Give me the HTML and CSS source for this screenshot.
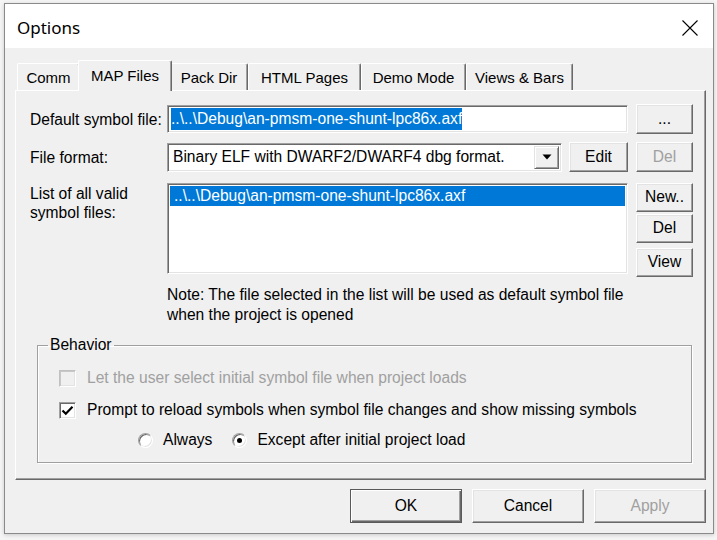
FILE: index.html
```html
<!DOCTYPE html>
<html>
<head>
<meta charset="utf-8">
<title>Options</title>
<link rel="stylesheet" href="styles.css">
</head>
<body>
<div class="window">
  <div class="titlebar">
    <span class="title">Options</span>
    <svg class="close" viewBox="0 0 16 16" width="16" height="16"><path d="M0.5 0.5 L15.5 15.5 M15.5 0.5 L0.5 15.5" stroke="#000" stroke-width="1.1" fill="none"/></svg>
  </div>
  <div class="body">
    <div class="tabs">
      <div class="tab w-comm">Comm</div>
      <div class="tab active w-map">MAP Files</div>
      <div class="tab w-pack">Pack Dir</div>
      <div class="tab w-html">HTML Pages</div>
      <div class="tab w-demo">Demo Mode</div>
      <div class="tab w-views">Views &amp; Bars</div>
    </div>
    <div class="panel">
      <div class="grid row1">
        <div class="label">Default symbol file:</div>
        <div class="sunken input"><span class="sel">..\..\Debug\an-pmsm-one-shunt-lpc86x.axf</span></div>
        <div class="btn">...</div>
      </div>
      <div class="grid row2">
        <div class="label">File format:</div>
        <div class="split">
          <div class="sunken select">
            <span class="selText">Binary ELF with DWARF2/DWARF4 dbg format.</span>
            <div class="dd"><svg width="10" height="6" viewBox="0 0 10 6"><path d="M0.5 0.5 H9.5 L5 5.5 Z" fill="#000"/></svg></div>
          </div>
          <div class="btn edit">Edit</div>
        </div>
        <div class="btn disabled">Del</div>
      </div>
      <div class="grid row3">
        <div class="label multi">List of all valid<br>symbol files:</div>
        <div class="sunken list">
          <div class="item selected">..\..\Debug\an-pmsm-one-shunt-lpc86x.axf</div>
        </div>
        <div class="btncol">
          <div class="btn">New..</div>
          <div class="btn del2">Del</div>
          <div class="btn view">View</div>
        </div>
      </div>
      <div class="note">Note: The file selected in the list will be used as default symbol file<br>when the project is opened</div>
      <fieldset class="group">
        <legend>Behavior</legend>
        <div class="crow disabled-text">
          <span class="check off"></span>
          <span>Let the user select initial symbol file when project loads</span>
        </div>
        <div class="crow">
          <span class="check on"><svg width="13" height="11" viewBox="0 0 13 11"><path d="M1.5 5.5 L4.8 8.8 L11.5 1.8" stroke="#000" stroke-width="2.2" fill="none"/></svg></span>
          <span>Prompt to reload symbols when symbol file changes and show missing symbols</span>
        </div>
        <div class="rrow">
          <span class="radio"></span><span class="rlabel">Always</span>
          <span class="radio on"><span class="dot"></span></span><span class="rlabel">Except after initial project load</span>
        </div>
      </fieldset>
    </div>
    <div class="buttons">
      <div class="btn big default">OK</div>
      <div class="btn big">Cancel</div>
      <div class="btn big disabled">Apply</div>
    </div>
  </div>
</div>
</body>
</html>
```

FILE: styles.css
```css
* { box-sizing: border-box; }
html, body { margin: 0; }
body {
  width: 717px;
  height: 540px;
  overflow: hidden;
  background: #f5f5f5;
  padding: 3px 0 0 4px;
  font-family: "Liberation Sans", Arial, sans-serif;
  font-size: 15.6px;
  color: #000;
}
.window {
  width: 710px;
  height: 531px;
  border: 1px solid #8a8a8a;
  background: #f0f0f0;
  display: flex;
  flex-direction: column;
  box-shadow: 0 1px 4px rgba(0,0,0,0.18);
}
.titlebar {
  flex: none;
  height: 44px;
  background: #fff;
  display: flex;
  align-items: center;
  justify-content: space-between;
  padding: 0 15px 0 12px;
}
.title {
  font-family: "Noto Sans", "Open Sans", sans-serif;
  font-size: 17px;
  margin-top: 2px;
}
.close { display: block; margin-top: 4px; }
.body {
  flex: 1;
  display: flex;
  flex-direction: column;
  padding: 12px 7px 10px 10px;
}
.tabs {
  flex: none;
  height: 30px;
  display: flex;
  align-items: flex-end;
  padding-left: 2px;
  position: relative;
  z-index: 1;
  font-size: 15px;
}
.tab {
  height: 27px;
  border: 1px solid;
  border-color: #fff #696969 transparent #fff;
  border-bottom: 0;
  box-shadow: inset -1px 0 #a0a0a0;
  border-radius: 2px 2px 0 0;
  background: #f0f0f0;
  display: flex;
  align-items: center;
  justify-content: center;
  padding-top: 1px;
}
.tab.active {
  height: 31px;
  margin: 0 -2px -1px -2px;
  padding-top: 0;
  padding-bottom: 2px;
  position: relative;
  z-index: 2;
}
.w-comm { width: 63px; }
.w-map { width: 94px; }
.w-pack { width: 78px; }
.w-html { width: 113px; }
.w-demo { width: 105px; }
.w-views { width: 107px; }
.panel {
  flex: none;
  height: 390px;
  border: 1px solid;
  border-color: #fff #696969 #696969 #fff;
  box-shadow: inset -1px -1px #a0a0a0;
  padding: 13px 12px 0 14px;
}
.grid {
  display: grid;
  grid-template-columns: 129px 461px 57px;
  column-gap: 8px;
}
.row1 { height: 30px; align-items: center; }
.row2 { height: 30px; margin-top: 8px; align-items: center; }
.row3 { margin-top: 11px; align-items: start; }
.label { line-height: 19px; white-space: nowrap; }
.multi { margin-top: 1px; }
.sunken {
  background: #fff;
  border: 1px solid;
  border-color: #a0a0a0 #fff #fff #a0a0a0;
  box-shadow: inset 1px 1px #696969, inset -1px -1px #e3e3e3;
}
.input {
  height: 28px;
  padding: 2px 2px 0 3px;
  white-space: nowrap;
  overflow: hidden;
}
.sel {
  display: inline-block;
  background: #0078d7;
  color: #fff;
  line-height: 22px;
  height: 22px;
}
.split { display: flex; gap: 7px; align-items: center; }
.select {
  width: 395px;
  height: 29px;
  position: relative;
  display: flex;
  align-items: center;
  padding-left: 5px;
  white-space: nowrap;
}
.dd {
  position: absolute;
  right: 2px;
  top: 2px;
  bottom: 2px;
  width: 25px;
  background: #f0f0f0;
  border: 1px solid;
  border-color: #e3e3e3 #696969 #696969 #e3e3e3;
  box-shadow: inset 1px 1px #fff, inset -1px -1px #a0a0a0;
  display: flex;
  align-items: center;
  justify-content: center;
}
.btn {
  height: 30px;
  background: #f0f0f0;
  border: 1px solid;
  border-color: #fff #696969 #696969 #fff;
  box-shadow: inset -1px -1px #a0a0a0, inset 1px 1px #e3e3e3;
  display: flex;
  align-items: center;
  justify-content: center;
  padding-bottom: 1px;
}
.edit { width: 59px; }
.disabled { color: #a0a0a0; }
.list {
  height: 91px;
  padding: 2px 2px;
}
.item {
  height: 20px;
  line-height: 20px;
  padding-left: 4px;
  white-space: nowrap;
}
.item.selected { background: #0078d7; color: #fff; }
.btncol { display: flex; flex-direction: column; }
.btncol .btn { height: 29px; }
.del2 { margin-top: 2px; }
.view { margin-top: 5px; }
.note {
  margin: 8px 0 0 137px;
  line-height: 20px;
  white-space: nowrap;
}
.group {
  margin: 11px 1px 0 7px;
  padding: 8px 0 8px 21px;
  border: 1px solid #a0a0a0;
  box-shadow: inset 1px 1px #fff, 1px 1px #fff;
  min-width: 0;
}
.group legend {
  margin-left: -11px;
  padding: 0 2px;
  line-height: 18px;
}
.crow {
  height: 32px;
  display: flex;
  align-items: center;
  white-space: nowrap;
}
.disabled-text { color: #a0a0a0; }
.check {
  width: 17px;
  height: 17px;
  margin-right: 11px;
  background: #fff;
  border: 1px solid;
  border-color: #a0a0a0 #fff #fff #a0a0a0;
  box-shadow: inset 1px 1px #696969, inset -1px -1px #e3e3e3;
  display: flex;
  align-items: center;
  justify-content: center;
  flex: none;
}
.check.off {
  background: #f0f0f0;
  box-shadow: inset 1px 1px #c8c8c8, inset -1px -1px #e3e3e3;
  border-color: #c0c0c0 #fff #fff #c0c0c0;
}
.rrow {
  height: 28px;
  display: flex;
  align-items: center;
  padding-left: 79px;
  white-space: nowrap;
}
.radio {
  width: 15px;
  height: 15px;
  border-radius: 50%;
  background: #fff;
  border: 1px solid;
  border-color: #a0a0a0 #fff #fff #a0a0a0;
  box-shadow: inset 1px 1px #696969, inset -1px -1px #e3e3e3;
  display: flex;
  align-items: center;
  justify-content: center;
  margin-right: 10px;
  flex: none;
}
.dot { width: 5px; height: 5px; border-radius: 50%; background: #000; }
.rlabel { margin-right: 20px; }
.buttons {
  margin-top: 9px;
  display: flex;
  justify-content: flex-end;
  gap: 10px;
}
.btn.big { width: 112px; height: 34px; }
.btn.default {
  border: 1px solid #5a5a5a;
  box-shadow: inset 1px 1px #fff, inset -1px -1px #696969, inset -2px -2px #a0a0a0;
}
```
